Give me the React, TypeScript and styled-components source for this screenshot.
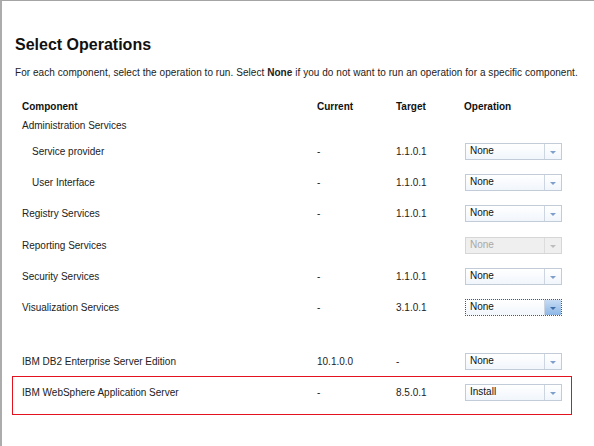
import styled, { createGlobalStyle, css } from "styled-components";

const GlobalStyle = createGlobalStyle`
  html, body {
    margin: 0;
    padding: 0;
    background: #fff;
  }
  body {
    font-family: "Liberation Sans", Arial, sans-serif;
  }
`;

const Frame = styled.div`
  width: 594px;
  height: 446px;
  box-sizing: border-box;
  border-top: 1px solid #a4a4a4;
  border-left: 2px solid #acacac;
  background: #fff;
  overflow: hidden;
`;

const Title = styled.h1`
  margin: 35px 0 0 13px;
  font-size: 16px;
  line-height: 18px;
  font-weight: bold;
  color: #111;
`;

const Description = styled.p`
  margin: 13px 0 0 13px;
  font-size: 10px;
  line-height: 12px;
  letter-spacing: 0.055px;
  color: #222;
  white-space: nowrap;
`;

const Table = styled.div`
  margin: 18px 0 0 10px;
  width: 560px;
  display: flex;
  flex-direction: column;
`;

const Row = styled.div<{ $height: number; $highlight?: boolean; $header?: boolean }>`
  display: grid;
  grid-template-columns: 295px 79px 68px 1fr;
  align-items: center;
  box-sizing: border-box;
  height: ${(p) => p.$height}px;
  padding-left: 9px;
  border: 1px solid transparent;
  font-size: 10px;
  color: #222;
  ${(p) =>
    p.$header &&
    css`
      font-weight: bold;
      color: #111;
    `}
  ${(p) =>
    p.$highlight &&
    css`
      border-color: #e3121e;
      padding-bottom: 7px;
    `}
`;

const Spacer = styled.div`
  height: 23px;
`;

const Name = styled.span<{ $indent?: boolean }>`
  padding-left: ${(p) => (p.$indent ? 10 : 0)}px;
  white-space: nowrap;
`;

const Cell = styled.span`
  white-space: nowrap;
`;

const Select = styled.div<{ $disabled?: boolean; $focused?: boolean }>`
  margin-left: 1px;
  width: 97px;
  height: 17px;
  box-sizing: border-box;
  display: flex;
  border: 1px solid #c2ccd8;
  background: linear-gradient(#ffffff, #f1f6fc);
  font-weight: normal;
  ${(p) =>
    p.$disabled &&
    css`
      background: #efefef;
      border-color: #d6d6d6;
    `}
  ${(p) =>
    p.$focused &&
    css`
      border: 1px dotted #555;
    `}
`;

const SelectValue = styled.span<{ $disabled?: boolean }>`
  flex: 1;
  padding-left: 4px;
  font-size: 10px;
  line-height: 13px;
  color: ${(p) => (p.$disabled ? "#a8a8a8" : "#111")};
`;

const SelectButton = styled.span<{ $disabled?: boolean; $focused?: boolean }>`
  width: 16px;
  display: flex;
  align-items: center;
  justify-content: center;
  border-left: 1px solid ${(p) => (p.$disabled ? "#dcdcdc" : "#ccd5e0")};
  background: ${(p) =>
    p.$focused ? "linear-gradient(#c6dcf4, #8db6e6)" : "transparent"};
`;

const Arrow = styled.span<{ $disabled?: boolean; $focused?: boolean }>`
  width: 0;
  height: 0;
  margin-top: 2px;
  border-left: 3px solid transparent;
  border-right: 3px solid transparent;
  border-top: 3px solid
    ${(p) => (p.$disabled ? "#bdbdbd" : p.$focused ? "#3d6da8" : "#7f9fca")};
`;

type SelectProps = { value: string; disabled?: boolean; focused?: boolean };

const Dropdown = ({ value, disabled, focused }: SelectProps) => (
  <Select $disabled={disabled} $focused={focused}>
    <SelectValue $disabled={disabled}>{value}</SelectValue>
    <SelectButton $disabled={disabled} $focused={focused}>
      <Arrow $disabled={disabled} $focused={focused} />
    </SelectButton>
  </Select>
);

interface Item {
  name: string;
  indent?: boolean;
  current?: string;
  target?: string;
  op?: string;
  disabled?: boolean;
  focused?: boolean;
  height: number;
}

const services: Item[] = [
  { name: "Administration Services", height: 21 },
  { name: "Service provider", indent: true, current: "-", target: "1.1.0.1", op: "None", height: 31 },
  { name: "User Interface", indent: true, current: "-", target: "1.1.0.1", op: "None", height: 31 },
  { name: "Registry Services", current: "-", target: "1.1.0.1", op: "None", height: 31 },
  { name: "Reporting Services", op: "None", disabled: true, height: 32 },
  { name: "Security Services", current: "-", target: "1.1.0.1", op: "None", height: 31 },
  { name: "Visualization Services", current: "-", target: "3.1.0.1", op: "None", focused: true, height: 31 },
];

const renderRow = (item: Item, highlight?: boolean) => (
  <Row key={item.name} $height={highlight ? 39 : item.height} $highlight={highlight}>
    <Name $indent={item.indent}>{item.name}</Name>
    <Cell>{item.current}</Cell>
    <Cell>{item.target}</Cell>
    {item.op ? (
      <Dropdown value={item.op} disabled={item.disabled} focused={item.focused} />
    ) : (
      <span />
    )}
  </Row>
);

export default function App() {
  return (
    <>
      <GlobalStyle />
      <Frame>
        <Title>Select Operations</Title>
        <Description>
          For each component, select the operation to run. Select <b>None</b> if you do
          not want to run an operation for a specific component.
        </Description>
        <Table>
          <Row $height={18} $header>
            <Name>Component</Name>
            <Cell>Current</Cell>
            <Cell>Target</Cell>
            <Cell>Operation</Cell>
          </Row>
          {services.map((s) => renderRow(s))}
          <Spacer />
          {renderRow({
            name: "IBM DB2 Enterprise Server Edition",
            current: "10.1.0.0",
            target: "-",
            op: "None",
            height: 30,
          })}
          {renderRow(
            {
              name: "IBM WebSphere Application Server",
              current: "-",
              target: "8.5.0.1",
              op: "Install",
              height: 31,
            },
            true
          )}
        </Table>
      </Frame>
    </>
  );
}
